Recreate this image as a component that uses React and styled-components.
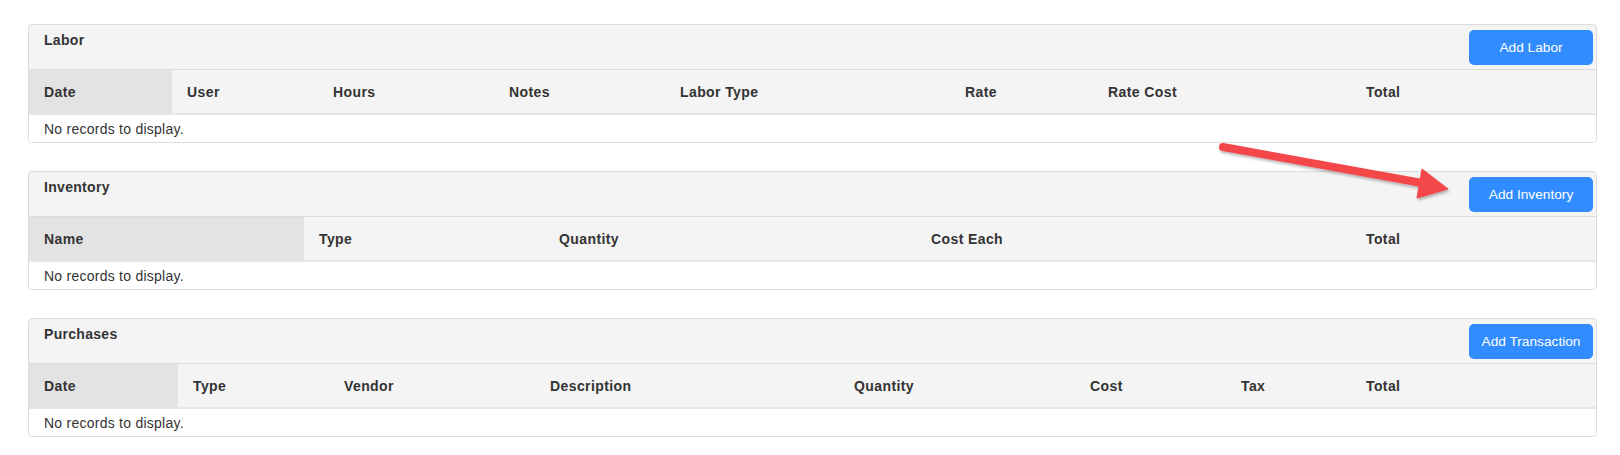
import React from 'react';
import styled, { createGlobalStyle } from 'styled-components';

const GlobalStyle = createGlobalStyle`
  html, body {
    margin: 0;
    padding: 0;
    background: #fff;
  }
  body {
    font-family: "Liberation Sans", Arial, sans-serif;
    font-size: 14px;
    color: #333;
  }
`;

const Page = styled.div`
  position: relative;
  width: 1620px;
  height: 455px;
  box-sizing: border-box;
  padding: 24px 23px 0 28px;
  display: flex;
  flex-direction: column;
  gap: 28px;
`;

const Panel = styled.section`
  border: 1px solid #dcdcdc;
  border-radius: 4px;
  background: #f4f4f4;
  overflow: hidden;
`;

const PanelHeader = styled.div`
  height: 44px;
  display: flex;
  align-items: flex-start;
  justify-content: space-between;
  padding: 0 3px 0 15px;
  border-bottom: 1px solid #dcdcdc;
`;

const Title = styled.h3`
  margin: 0;
  padding-top: 7px;
  font-size: 14px;
  font-weight: bold;
  line-height: 17px;
  letter-spacing: 0.3px;
  color: #333;
`;

const AddButton = styled.button`
  margin-top: 5px;
  width: 124px;
  height: 35px;
  border: none;
  border-radius: 5px;
  background: #318dff;
  color: #fff;
  font-family: "Liberation Sans", Arial, sans-serif;
  font-size: 13.7px;
  cursor: pointer;
`;

const HeadRow = styled.div`
  display: grid;
  grid-template-columns: ${props => props.$cols};
  height: 43px;
  border-bottom: 2px solid #e6e6e6;
`;

const HeadCell = styled.div`
  display: flex;
  align-items: center;
  padding: 0 15px;
  font-weight: bold;
  letter-spacing: 0.4px;
  white-space: nowrap;
  color: #333;
  background: ${props => (props.$sorted ? '#e3e3e3' : 'transparent')};
`;

const EmptyRow = styled.div`
  height: 27px;
  display: flex;
  align-items: center;
  padding: 0 15px;
  background: #fff;
  letter-spacing: 0.25px;
  color: #333;
`;

const Arrow = styled.svg`
  position: absolute;
  left: 1200px;
  top: 130px;
  overflow: visible;
  pointer-events: none;
`;

const grids = [
  {
    title: 'Labor',
    button: 'Add Labor',
    cols: '143px 146px 176px 171px 285px 143px 258px 1fr',
    columns: ['Date', 'User', 'Hours', 'Notes', 'Labor Type', 'Rate', 'Rate Cost', 'Total'],
  },
  {
    title: 'Inventory',
    button: 'Add Inventory',
    cols: '275px 240px 372px 435px 1fr',
    columns: ['Name', 'Type', 'Quantity', 'Cost Each', 'Total'],
  },
  {
    title: 'Purchases',
    button: 'Add Transaction',
    cols: '149px 151px 206px 304px 236px 151px 125px 1fr',
    columns: ['Date', 'Type', 'Vendor', 'Description', 'Quantity', 'Cost', 'Tax', 'Total'],
  },
];

const GridPanel = ({ title, button, cols, columns }) => (
  <Panel>
    <PanelHeader>
      <Title>{title}</Title>
      <AddButton type="button">{button}</AddButton>
    </PanelHeader>
    <HeadRow $cols={cols}>
      {columns.map((c, i) => (
        <HeadCell key={c} $sorted={i === 0}>{c}</HeadCell>
      ))}
    </HeadRow>
    <EmptyRow>No records to display.</EmptyRow>
  </Panel>
);

const App = () => (
  <>
    <GlobalStyle />
    <Page>
      {grids.map(g => <GridPanel key={g.title} {...g} />)}
      <Arrow width="270" height="80" viewBox="0 0 270 80">
        <defs>
          <filter id="shadow" x="-10%" y="-30%" width="120%" height="160%">
            <feDropShadow dx="1" dy="2" stdDeviation="1.5" floodColor="#000" floodOpacity="0.3" />
          </filter>
        </defs>
        <g filter="url(#shadow)" fill="#f4474a" stroke="#f4474a">
          <line x1="23" y1="17" x2="222" y2="53" strokeWidth="8" strokeLinecap="round" />
          <polygon points="248,59 222,39 217,68" strokeWidth="1" strokeLinejoin="round" />
        </g>
      </Arrow>
    </Page>
  </>
);

export default App;
